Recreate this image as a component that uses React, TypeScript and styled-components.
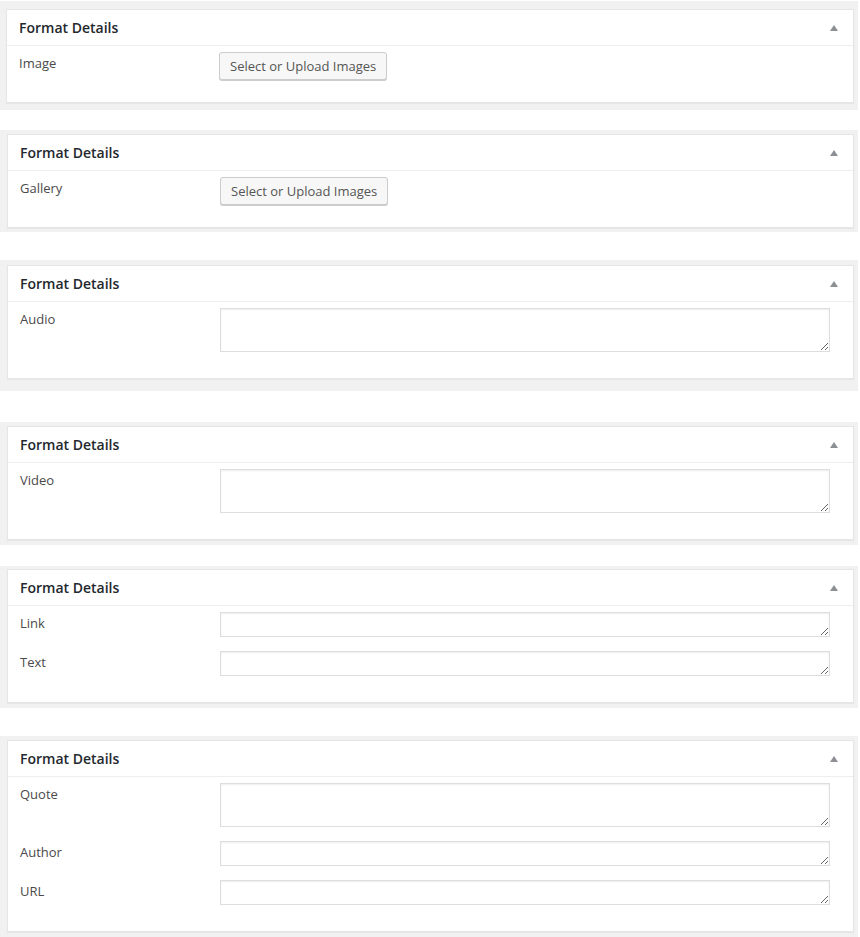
import React from 'react';
import styled, { createGlobalStyle } from 'styled-components';

const GlobalStyle = createGlobalStyle`
  body {
    margin: 0;
    background: #ffffff;
    font-family: 'Open Sans', 'Noto Sans', 'Liberation Sans', sans-serif;
  }
`;

type Field =
  | { label: string; kind: 'media' }
  | { label: string; kind: 'text'; rows: 1 | 2 };

interface MetaBoxData {
  offset: number;
  padTop: number;
  padBottom: number;
  padLeft: number;
  fields: Field[];
}

// --- Styled-component --- //
const Page = styled.div`
  display: flex;
  flex-direction: column;
  width: 860px;
`;

const Frame = styled.section<{
  $offset: number;
  $padTop: number;
  $padBottom: number;
  $padLeft: number;
}>`
  box-sizing: border-box;
  width: 858px;
  margin-top: ${(p) => p.$offset}px;
  padding: ${(p) => `${p.$padTop}px 4px ${p.$padBottom}px ${p.$padLeft}px`};
  background: #f1f1f1;
`;

const Box = styled.div`
  background: #ffffff;
  border: 1px solid #e5e5e5;
  box-shadow: 0 1px 1px rgba(0, 0, 0, 0.04);
`;

const BoxHeader = styled.div`
  display: flex;
  align-items: center;
  justify-content: space-between;
  height: 35px;
  padding: 0 15px 0 12px;
  border-bottom: 1px solid #eeeeee;
`;

const BoxTitle = styled.h2`
  margin: 0;
  font-size: 14px;
  font-weight: 600;
  color: #23282d;
`;

const Toggle = styled.span`
  width: 0;
  height: 0;
  margin-top: 1px;
  border-left: 4px solid transparent;
  border-right: 4px solid transparent;
  border-bottom: 6px solid #8c8f94;
`;

const BoxBody = styled.div`
  display: flex;
  flex-direction: column;
  padding: 6px 23px 12px 12px;
`;

const Row = styled.div<{ $gap: number }>`
  display: flex;
  align-items: flex-start;
  margin-bottom: ${(p) => p.$gap}px;
`;

const Label = styled.label`
  flex: 0 0 200px;
  padding-top: 1px;
  font-size: 13px;
  line-height: 20px;
  color: #4a4a4a;
`;

const MediaButton = styled.button`
  height: 28px;
  padding: 0 10px;
  font-family: inherit;
  font-size: 13px;
  line-height: 26px;
  color: #555555;
  background: #f7f7f7;
  border: 1px solid #cccccc;
  border-radius: 3px;
  box-shadow: 0 1px 0 #cccccc;
  cursor: pointer;
`;

const TextArea = styled.textarea<{ $height: number }>`
  flex: 1;
  box-sizing: border-box;
  height: ${(p) => p.$height}px;
  margin: 0;
  padding: 2px 6px;
  font-family: inherit;
  font-size: 14px;
  border: 1px solid #dddddd;
  box-shadow: inset 0 1px 2px rgba(0, 0, 0, 0.07);
  background: #ffffff;
  outline: none;
`;

const boxes: MetaBoxData[] = [
  { offset: 1, padTop: 8, padBottom: 7, padLeft: 6, fields: [{ label: 'Image', kind: 'media' }] },
  { offset: 20, padTop: 4, padBottom: 4, padLeft: 7, fields: [{ label: 'Gallery', kind: 'media' }] },
  { offset: 28, padTop: 5, padBottom: 12, padLeft: 7, fields: [{ label: 'Audio', kind: 'text', rows: 2 }] },
  { offset: 31, padTop: 4, padBottom: 5, padLeft: 7, fields: [{ label: 'Video', kind: 'text', rows: 2 }] },
  {
    offset: 21,
    padTop: 3,
    padBottom: 5,
    padLeft: 7,
    fields: [
      { label: 'Link', kind: 'text', rows: 1 },
      { label: 'Text', kind: 'text', rows: 1 },
    ],
  },
  {
    offset: 28,
    padTop: 4,
    padBottom: 5,
    padLeft: 7,
    fields: [
      { label: 'Quote', kind: 'text', rows: 2 },
      { label: 'Author', kind: 'text', rows: 1 },
      { label: 'URL', kind: 'text', rows: 1 },
    ],
  },
];

function FormatField({ field }: { field: Field }) {
  if (field.kind === 'media') {
    return (
      <Row $gap={10}>
        <Label>{field.label}</Label>
        <MediaButton type="button">Select or Upload Images</MediaButton>
      </Row>
    );
  }
  return (
    <Row $gap={14}>
      <Label>{field.label}</Label>
      <TextArea rows={field.rows} $height={field.rows === 2 ? 44 : 25} />
    </Row>
  );
}

function FormatDetails({ box }: { box: MetaBoxData }) {
  return (
    <Frame
      $offset={box.offset}
      $padTop={box.padTop}
      $padBottom={box.padBottom}
      $padLeft={box.padLeft}
    >
      <Box>
        <BoxHeader>
          <BoxTitle>Format Details</BoxTitle>
          <Toggle />
        </BoxHeader>
        <BoxBody>
          {box.fields.map((field) => (
            <FormatField key={field.label} field={field} />
          ))}
        </BoxBody>
      </Box>
    </Frame>
  );
}

export default function App() {
  return (
    <>
      <GlobalStyle />
      <Page>
        {boxes.map((box, i) => (
          <FormatDetails key={i} box={box} />
        ))}
      </Page>
    </>
  );
}
